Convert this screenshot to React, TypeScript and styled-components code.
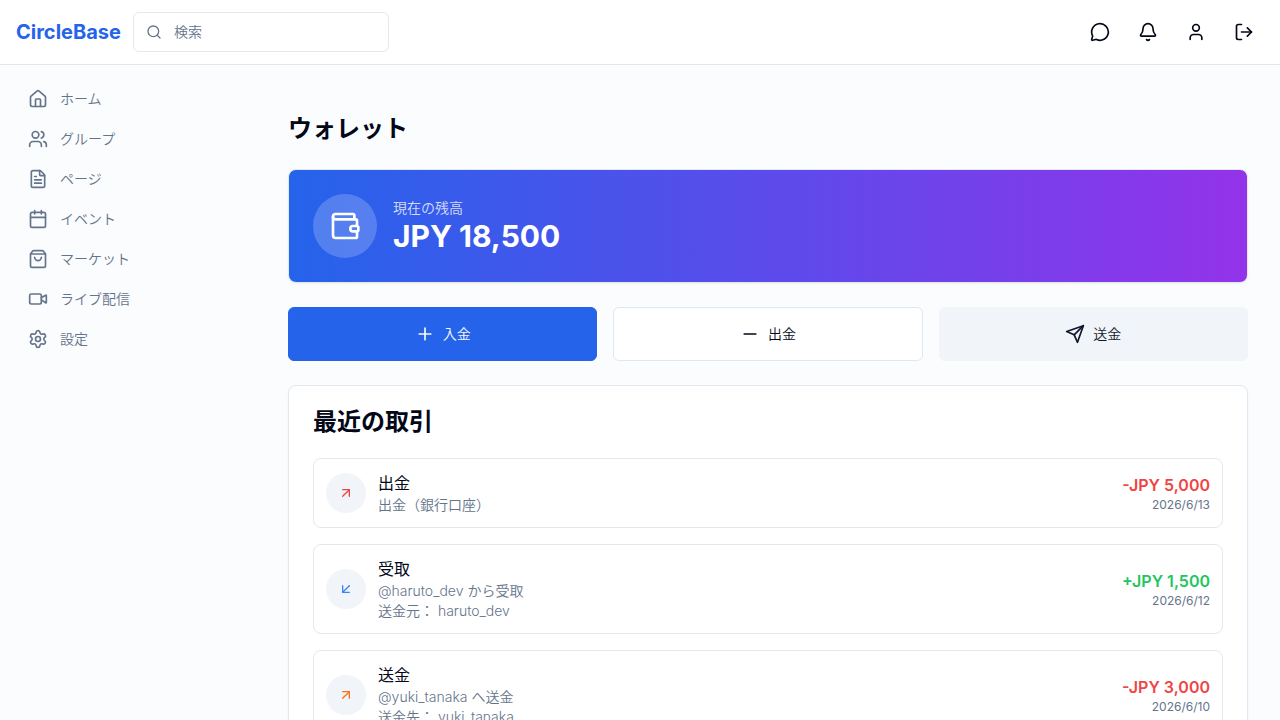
import React from "react";
import styled, { createGlobalStyle, css } from "styled-components";
import {
  ArrowDownLeft,
  ArrowUpRight,
  Bell,
  Calendar,
  FileText,
  House,
  LogOut,
  MessageCircle,
  Minus,
  Plus,
  Search,
  Settings,
  ShoppingBag,
  User,
  Users,
  Video,
} from "lucide-react";

const GlobalStyle = createGlobalStyle`
  *, *::before, *::after { box-sizing: border-box; }
  body {
    margin: 0;
    background: #fbfcfe;
    color: #020817;
    font-family: Inter, "Noto Sans CJK JP", sans-serif;
    font-size: 16px;
    line-height: 24px;
  }
  h1, h2, p, ul { margin: 0; padding: 0; }
  ul { list-style: none; }
  button, input { font: inherit; color: inherit; }
  button { cursor: pointer; }
  svg { display: block; flex-shrink: 0; }
`;

const Header = styled.header`
  position: sticky;
  top: 0;
  z-index: 1;
  display: flex;
  align-items: center;
  gap: 12px;
  height: 65px;
  padding: 0 16px;
  background: #fff;
  border-bottom: 1px solid #e2e8f0;
`;

const Brand = styled.a`
  color: #2563eb;
  font-size: 20px;
  line-height: 28px;
  font-weight: 700;
  text-decoration: none;
`;

const SearchBox = styled.label`
  display: flex;
  align-items: center;
  gap: 12px;
  width: 256px;
  height: 40px;
  padding: 0 12px;
  background: #fff;
  border: 1px solid #e2e8f0;
  border-radius: 6px;
  color: #64748b;
`;

const SearchInput = styled.input`
  flex: 1;
  min-width: 0;
  padding: 0;
  border: 0;
  outline: 0;
  background: transparent;
  font-size: 14px;
  line-height: 20px;
  font-weight: 350;
  &::placeholder {
    color: #64748b;
    opacity: 1;
  }
`;

const HeaderActions = styled.div`
  display: flex;
  gap: 8px;
  margin-left: auto;
`;

const IconButton = styled.button`
  display: grid;
  place-items: center;
  width: 40px;
  height: 40px;
  padding: 0;
  border: 0;
  border-radius: 6px;
  background: transparent;
`;

const Body = styled.div`
  display: flex;
  align-items: flex-start;
`;

const Sidebar = styled.nav`
  flex: 0 0 256px;
  padding: 16px;
`;

const NavList = styled.ul`
  display: grid;
  gap: 4px;
`;

const NavLink = styled.a`
  display: flex;
  align-items: center;
  gap: 12px;
  padding: 8px 12px;
  border-radius: 6px;
  color: #64748b;
  font-size: 14px;
  line-height: 20px;
  font-weight: 350;
  text-decoration: none;
`;

const Main = styled.main`
  flex: 1;
  min-width: 0;
  display: grid;
  gap: 24px;
  padding: 48px 32px;
`;

const PageTitle = styled.h1`
  font-size: 24px;
  line-height: 32px;
  font-weight: 600;
`;

const cardFrame = css`
  padding: 24px;
  border: 1px solid #e2e8f0;
  border-radius: 8px;
  box-shadow: 0 1px 2px rgba(0, 0, 0, 0.05);
`;

const BalanceCard = styled.section`
  ${cardFrame}
  display: flex;
  align-items: center;
  gap: 16px;
  background: linear-gradient(to right, #2563eb, #9333ea);
  color: #fff;
`;

const BalanceIcon = styled.div`
  display: grid;
  place-items: center;
  width: 64px;
  height: 64px;
  border-radius: 50%;
  background: rgba(255, 255, 255, 0.2);
`;

const BalanceLabel = styled.p`
  font-size: 14px;
  line-height: 20px;
  font-weight: 350;
  color: rgba(255, 255, 255, 0.8);
`;

const BalanceValue = styled.p`
  font-size: 30px;
  line-height: 36px;
  font-weight: 700;
`;

const Actions = styled.div`
  display: grid;
  grid-template-columns: repeat(3, 1fr);
  gap: 16px;
`;

type Tone = "primary" | "outline" | "muted";

const actionTones = {
  primary: css`
    background: #2563eb;
    border-color: #2563eb;
    color: #f8fafc;
  `,
  outline: css`
    background: #fff;
    border-color: #e2e8f0;
  `,
  muted: css`
    background: #f1f5f9;
    border-color: #f1f5f9;
    color: #0f172a;
  `,
};

const ActionButton = styled.button<{ $tone: Tone }>`
  display: flex;
  align-items: center;
  justify-content: center;
  gap: 8px;
  padding: 16px;
  border: 1px solid;
  border-radius: 6px;
  font-size: 14px;
  line-height: 20px;
  font-weight: 350;
  ${(p) => actionTones[p.$tone]}
`;

const HistoryCard = styled.section`
  ${cardFrame}
  display: grid;
  gap: 24px;
  background: #fff;
`;

const SectionTitle = styled.h2`
  font-size: 24px;
  line-height: 24px;
  font-weight: 600;
`;

const TransactionList = styled.ul`
  display: grid;
  gap: 16px;
`;

const TransactionRow = styled.li`
  display: flex;
  align-items: center;
  gap: 12px;
  padding: 12px;
  border: 1px solid #e2e8f0;
  border-radius: 8px;
`;

const TransactionIcon = styled.div<{ $color: string }>`
  display: grid;
  place-items: center;
  width: 40px;
  height: 40px;
  border-radius: 50%;
  background: #f1f5f9;
  color: ${(p) => p.$color};
`;

const TransactionInfo = styled.div`
  flex: 1;
  min-width: 0;
`;

const TransactionTitle = styled.p`
  font-weight: 400;
`;

const TransactionNote = styled.p`
  color: #64748b;
  font-size: 14px;
  line-height: 20px;
  font-weight: 350;
`;

const TransactionFigures = styled.div`
  text-align: right;
`;

const Amount = styled.p<{ $incoming: boolean }>`
  font-weight: 600;
  color: ${(p) => (p.$incoming ? "#22c55e" : "#ef4444")};
`;

const DateText = styled.p`
  color: #64748b;
  font-size: 12px;
  line-height: 16px;
`;

const WalletIcon = () => (
  <svg width="32" height="32" viewBox="0 0 24 24" fill="none" stroke="currentColor" strokeWidth="2" strokeLinecap="round" strokeLinejoin="round" aria-hidden="true">
    <path d="M19 7V4a1 1 0 0 0-1-1H5a2 2 0 0 0 0 4h15a1 1 0 0 1 1 1v4h-3a2 2 0 0 0 0 4h3a1 1 0 0 0 1-1v-2a1 1 0 0 0-1-1" />
    <path d="M3 5v14a2 2 0 0 0 2 2h15a1 1 0 0 0 1-1v-4" />
  </svg>
);

const SendIcon = () => (
  <svg width="20" height="20" viewBox="0 0 24 24" fill="none" stroke="currentColor" strokeWidth="2" strokeLinecap="round" strokeLinejoin="round" aria-hidden="true">
    <path d="m22 2-7 20-4-9-9-4Z" />
    <path d="M22 2 11 13" />
  </svg>
);

const navItems = [
  { label: "ホーム", Icon: House },
  { label: "グループ", Icon: Users },
  { label: "ページ", Icon: FileText },
  { label: "イベント", Icon: Calendar },
  { label: "マーケット", Icon: ShoppingBag },
  { label: "ライブ配信", Icon: Video },
  { label: "設定", Icon: Settings },
];

const headerActions = [
  { label: "メッセージ", Icon: MessageCircle },
  { label: "通知", Icon: Bell },
  { label: "プロフィール", Icon: User },
  { label: "ログアウト", Icon: LogOut },
];

const transactions = [
  { title: "出金", notes: ["出金（銀行口座）"], amount: "-JPY 5,000", date: "2026/6/13", color: "#ef4444", Icon: ArrowUpRight },
  { title: "受取", notes: ["@haruto_dev から受取", "送金元： haruto_dev"], amount: "+JPY 1,500", date: "2026/6/12", color: "#3b82f6", Icon: ArrowDownLeft },
  { title: "送金", notes: ["@yuki_tanaka へ送金", "送金先： yuki_tanaka"], amount: "-JPY 3,000", date: "2026/6/10", color: "#f97316", Icon: ArrowUpRight },
];

export default function App() {
  return (
    <>
      <GlobalStyle />
      <Header>
        <Brand href="#">CircleBase</Brand>
        <SearchBox>
          <Search size={16} />
          <SearchInput type="search" placeholder="検索" aria-label="検索" />
        </SearchBox>
        <HeaderActions>
          {headerActions.map(({ label, Icon }) => (
            <IconButton key={label} type="button" aria-label={label}>
              <Icon size={20} />
            </IconButton>
          ))}
        </HeaderActions>
      </Header>
      <Body>
        <Sidebar>
          <NavList>
            {navItems.map(({ label, Icon }) => (
              <li key={label}>
                <NavLink href="#">
                  <Icon size={20} />
                  {label}
                </NavLink>
              </li>
            ))}
          </NavList>
        </Sidebar>
        <Main>
          <PageTitle>ウォレット</PageTitle>
          <BalanceCard>
            <BalanceIcon>
              <WalletIcon />
            </BalanceIcon>
            <div>
              <BalanceLabel>現在の残高</BalanceLabel>
              <BalanceValue>JPY 18,500</BalanceValue>
            </div>
          </BalanceCard>
          <Actions>
            <ActionButton type="button" $tone="primary">
              <Plus size={20} />
              入金
            </ActionButton>
            <ActionButton type="button" $tone="outline">
              <Minus size={20} />
              出金
            </ActionButton>
            <ActionButton type="button" $tone="muted">
              <SendIcon />
              送金
            </ActionButton>
          </Actions>
          <HistoryCard>
            <SectionTitle>最近の取引</SectionTitle>
            <TransactionList>
              {transactions.map(({ title, notes, amount, date, color, Icon }) => (
                <TransactionRow key={date}>
                  <TransactionIcon $color={color}>
                    <Icon size={16} />
                  </TransactionIcon>
                  <TransactionInfo>
                    <TransactionTitle>{title}</TransactionTitle>
                    {notes.map((note) => (
                      <TransactionNote key={note}>{note}</TransactionNote>
                    ))}
                  </TransactionInfo>
                  <TransactionFigures>
                    <Amount $incoming={amount.startsWith("+")}>{amount}</Amount>
                    <DateText>{date}</DateText>
                  </TransactionFigures>
                </TransactionRow>
              ))}
            </TransactionList>
          </HistoryCard>
        </Main>
      </Body>
    </>
  );
}
